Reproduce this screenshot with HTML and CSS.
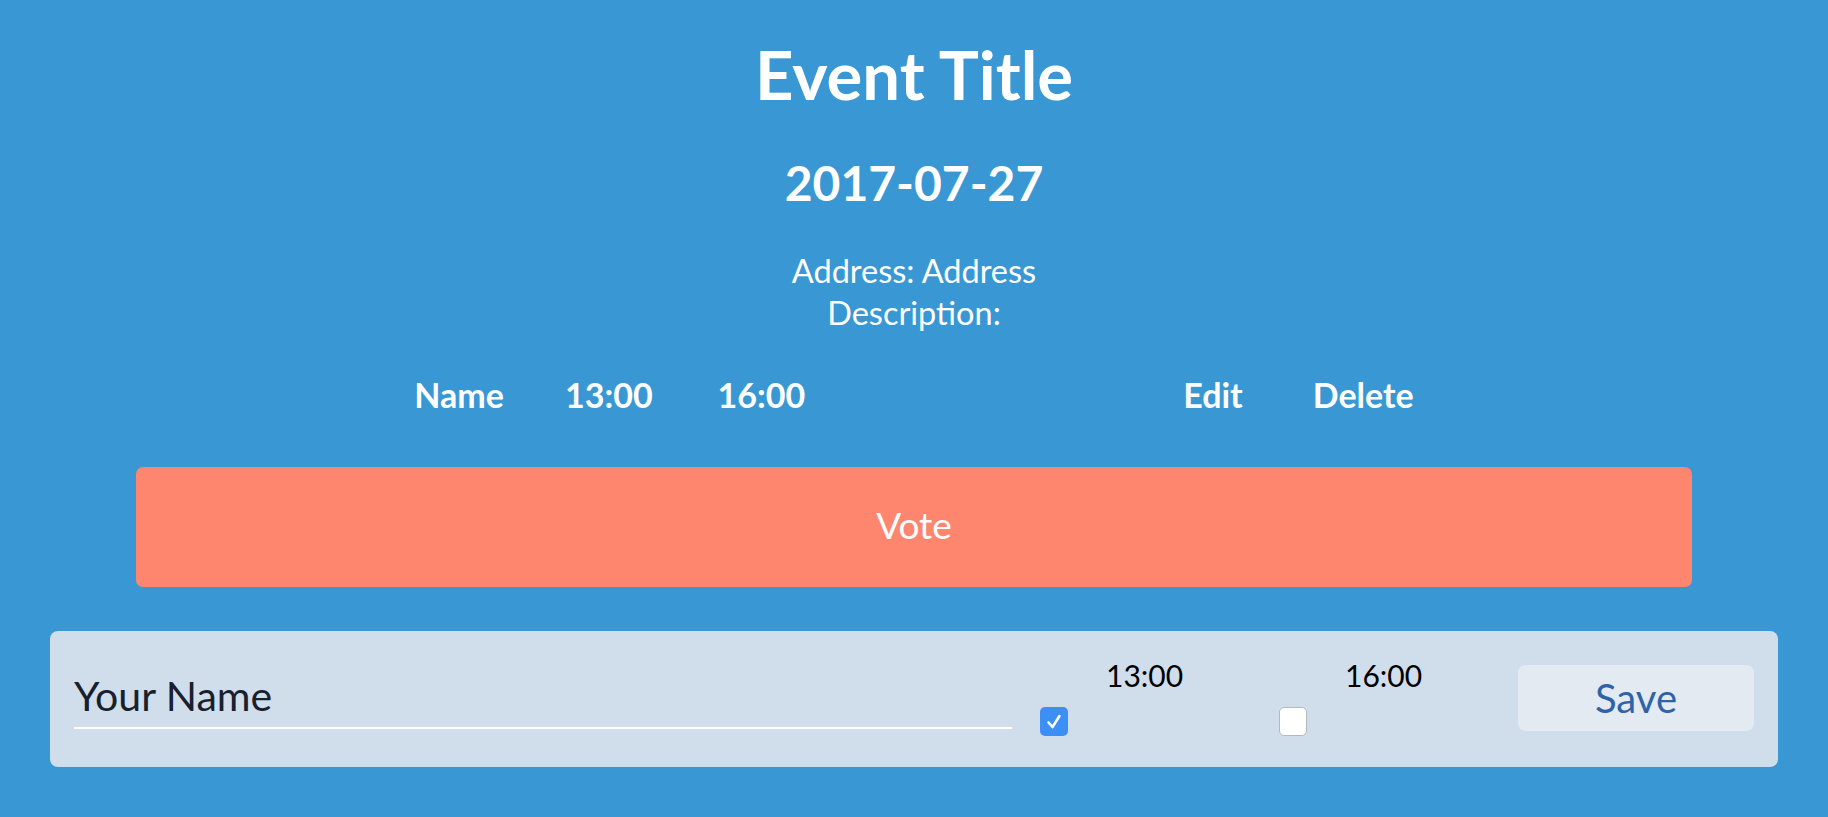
FILE: index.html
```html
<!DOCTYPE html>
<html>
<head>
<meta charset="utf-8">
<link rel="stylesheet" href="styles.css">
</head>
<body>
<main class="page">
  <h1 class="title">Event Title</h1>
  <h2 class="date">2017-07-27</h2>
  <div class="info">
    <div>Address: Address</div>
    <div>Description:</div>
  </div>
  <div class="header-row">
    <span class="first">Name</span>
    <span>13:00</span>
    <span>16:00</span>
    <span class="spacer"></span>
    <span>Edit</span>
    <span class="wide">Delete</span>
  </div>
  <button class="vote">Vote</button>
  <form class="card">
    <input class="name-input" type="text" placeholder="Your Name">
    <div class="option">
      <span class="opt-label">13:00</span>
      <span class="box checked">
        <svg viewBox="0 0 28 29" width="28" height="29"><path d="M8.5 15.5 L12.5 20 L19.5 9" fill="none" stroke="#fff" stroke-width="2.6" stroke-linecap="round" stroke-linejoin="round"/></svg>
      </span>
    </div>
    <div class="option">
      <span class="opt-label">16:00</span>
      <span class="box"></span>
    </div>
    <button type="button" class="save">Save</button>
  </form>
</main>
</body>
</html>
```

FILE: styles.css
```css
html, body {
  margin: 0;
  padding: 0;
}
body {
  background: #3998d4;
  font-family: "Lato", "Open Sans", sans-serif;
  color: #ffffff;
  height: 817px;
  overflow: hidden;
}
.page {
  display: flex;
  flex-direction: column;
  align-items: center;
}
.title {
  margin: 34px 0 0;
  font-size: 67px;
  line-height: 80px;
  font-weight: 700;
}
.date {
  margin: 39px 0 0;
  font-size: 48px;
  line-height: 60px;
  font-weight: 700;
}
.info {
  margin-top: 37px;
  font-size: 32.5px;
  line-height: 42px;
  text-align: center;
}
.header-row {
  margin-top: 41px;
  display: flex;
  column-gap: 65px;
  font-size: 34px;
  line-height: 40px;
  font-weight: 700;
}
.header-row .first {
  margin-right: -4px;
}
.header-row .spacer {
  width: 248px;
}
.header-row .wide {
  margin-left: 5px;
}
.vote {
  margin-top: 52px;
  align-self: stretch;
  margin-left: 136px;
  margin-right: 136px;
  height: 120px;
  border: none;
  border-radius: 7px;
  background: #ff866e;
  color: #ffffff;
  font-family: inherit;
  font-size: 37px;
  padding: 0 0 6px;
}
.card {
  margin: 44px 50px 0;
  align-self: stretch;
  height: 136px;
  box-sizing: border-box;
  background: #d0ddea;
  border-radius: 8px;
  display: flex;
  align-items: flex-start;
  padding: 0 24px;
}
.name-input {
  margin-top: 39px;
  width: 938px;
  height: 50px;
  box-sizing: content-box;
  padding: 0 0 7px;
  border: none;
  border-bottom: 2px solid #ffffff;
  background: transparent;
  font-family: inherit;
  font-size: 41px;
  color: #18202e;
  outline: none;
  margin-right: 28px;
}
.name-input::placeholder {
  color: #18202e;
  opacity: 1;
}
.option {
  margin-top: 26px;
  width: 239px;
  display: flex;
  flex-direction: column;
  align-items: flex-start;
}
.opt-label {
  margin-left: 66px;
  font-size: 30px;
  line-height: 36px;
  color: #000000;
}
.box {
  margin-top: 14px;
  width: 26px;
  height: 27px;
  border-radius: 5px;
  background: #ffffff;
  border: 1px solid #b5b9bf;
  display: block;
}
.box.checked {
  width: 28px;
  height: 29px;
  border: none;
  background: #3c8ff5;
}
.box svg {
  display: block;
}
.save {
  margin-top: 34px;
  width: 236px;
  height: 66px;
  border: none;
  border-radius: 8px;
  background: #e3eaf2;
  color: #2d64a8;
  font-family: inherit;
  font-size: 40px;
  padding: 0;
}
```
